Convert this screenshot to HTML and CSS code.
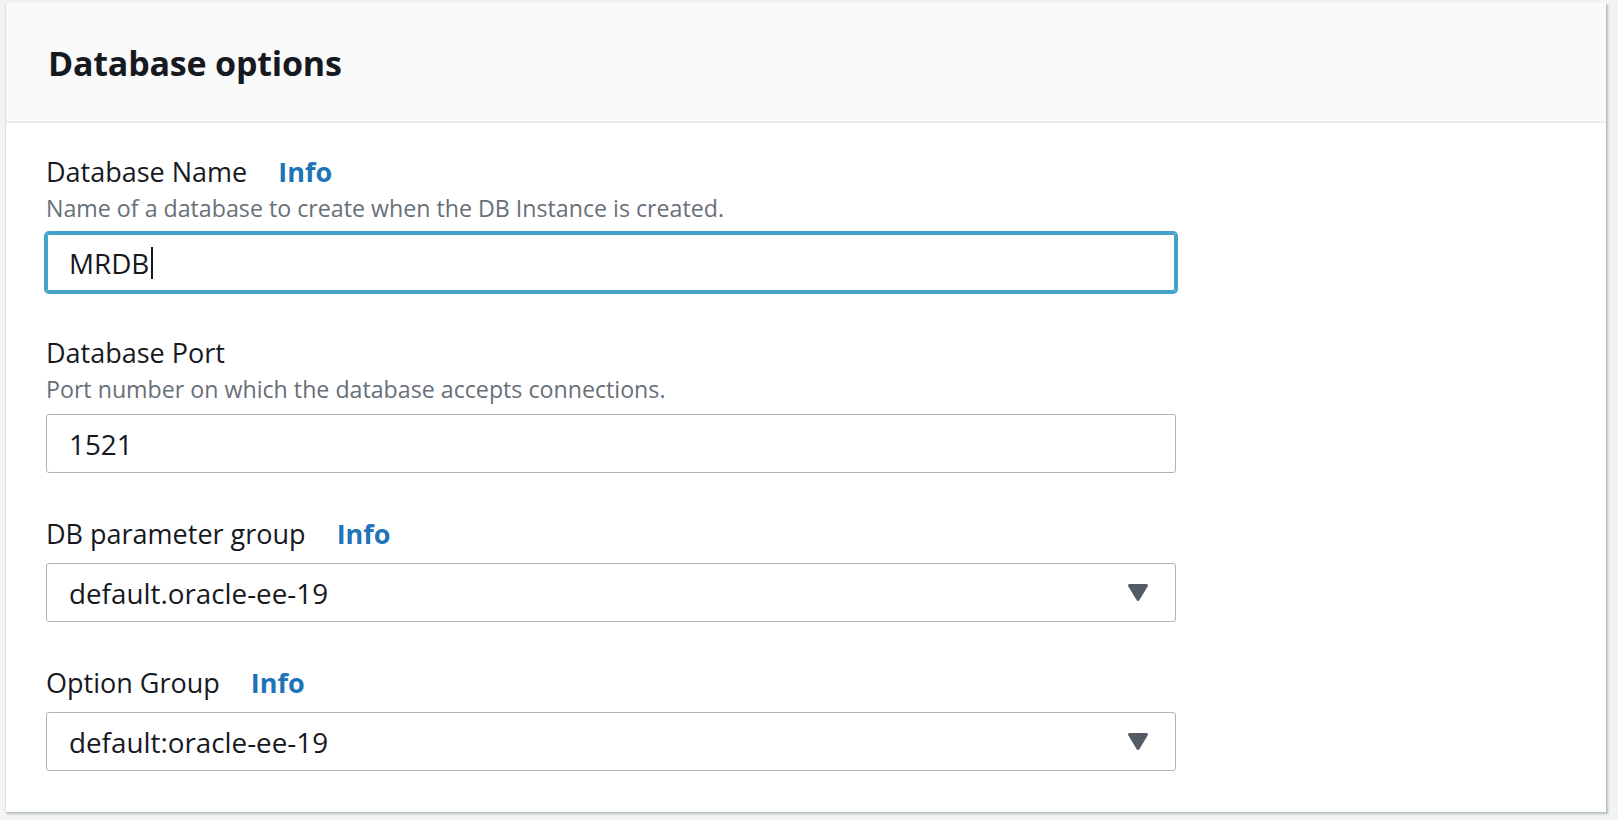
FILE: index.html
```html
<!DOCTYPE html>
<html>
<head>
<meta charset="utf-8">
<link rel="stylesheet" href="styles.css">
</head>
<body>
<div class="card">
  <div class="card-header"><h2 class="title">Database options</h2></div>
  <div class="card-body">
    <div class="field">
      <div class="label-row"><span class="label">Database Name</span><a class="info">Info</a></div>
      <div class="desc">Name of a database to create when the DB Instance is created.</div>
      <div class="input focused"><span>MRDB</span><span class="caret"></span></div>
    </div>
    <div class="field">
      <div class="label-row"><span class="label">Database Port</span></div>
      <div class="desc">Port number on which the database accepts connections.</div>
      <div class="input"><span>1521</span></div>
    </div>
    <div class="field">
      <div class="label-row"><span class="label">DB parameter group</span><a class="info">Info</a></div>
      <div class="input select"><span>default.oracle-ee-19</span>
        <svg class="arrow" width="22" height="19" viewBox="0 0 22 19"><path d="M2.5 2.5 L19.5 2.5 L11 16.5 Z" fill="#545b64" stroke="#545b64" stroke-width="3" stroke-linejoin="round"/></svg>
      </div>
    </div>
    <div class="field">
      <div class="label-row"><span class="label">Option Group</span><a class="info">Info</a></div>
      <div class="input select"><span>default:oracle-ee-19</span>
        <svg class="arrow" width="22" height="19" viewBox="0 0 22 19"><path d="M2.5 2.5 L19.5 2.5 L11 16.5 Z" fill="#545b64" stroke="#545b64" stroke-width="3" stroke-linejoin="round"/></svg>
      </div>
    </div>
  </div>
</div>
</body>
</html>
```
FILE: styles.css
```css
html, body {
  margin: 0;
  padding: 0;
  background: #f2f3f3;
  font-family: "Open Sans", "Noto Sans", sans-serif;
  color: #16191f;
}
body {
  padding: 3px 0 0 5px;
  height: 820px;
  box-sizing: border-box;
}
.card {
  width: 1601px;
  height: 809px;
  box-sizing: border-box;
  background: #fff;
  border-left: 1px solid #dfe2e2;
  box-shadow: 1px 1px 0 0 #b9c0c0, 2px 2px 2px 0 rgba(0,28,36,0.25);
}
.card-header {
  height: 120px;
  background: #fafafa;
  border-bottom: 2px solid #eaeded;
  box-sizing: border-box;
  display: flex;
  align-items: center;
  padding-left: 42px;
}
.title {
  margin: 0;
  font-size: 34px;
  font-weight: 700;
  line-height: 40px;
  letter-spacing: -0.2px;
  padding-top: 2px;
}
.card-body {
  padding: 32px 0 0 40px;
  display: flex;
  flex-direction: column;
  gap: 44px;
}
.label-row {
  display: flex;
  align-items: center;
  gap: 31px;
  height: 34px;
}
.label {
  font-size: 27px;
  line-height: 34px;
}
.info {
  font-size: 27px;
  font-weight: 700;
  color: #1f73b7;
  line-height: 34px;
}
.desc {
  font-size: 23.2px;
  line-height: 30px;
  color: #687078;
  margin-top: 4px;
  margin-bottom: 10px;
}
.label-row + .input {
  margin-top: 12px;
}
.input {
  width: 1130px;
  height: 59px;
  box-sizing: border-box;
  border: 1px solid #aab7b8;
  border-radius: 3px;
  display: flex;
  align-items: center;
  padding-left: 22px;
  font-size: 27.8px;
  position: relative;
}
.input.focused {
  border: 2px solid #44a3c8;
  box-shadow: 0 0 0 2px #44a3c8;
  padding-left: 21px;
}
.caret {
  display: inline-block;
  width: 2px;
  height: 32px;
  background: #16191f;
  margin-left: 2px;
}
.arrow {
  position: absolute;
  right: 26px;
  top: 19px;
}
```
